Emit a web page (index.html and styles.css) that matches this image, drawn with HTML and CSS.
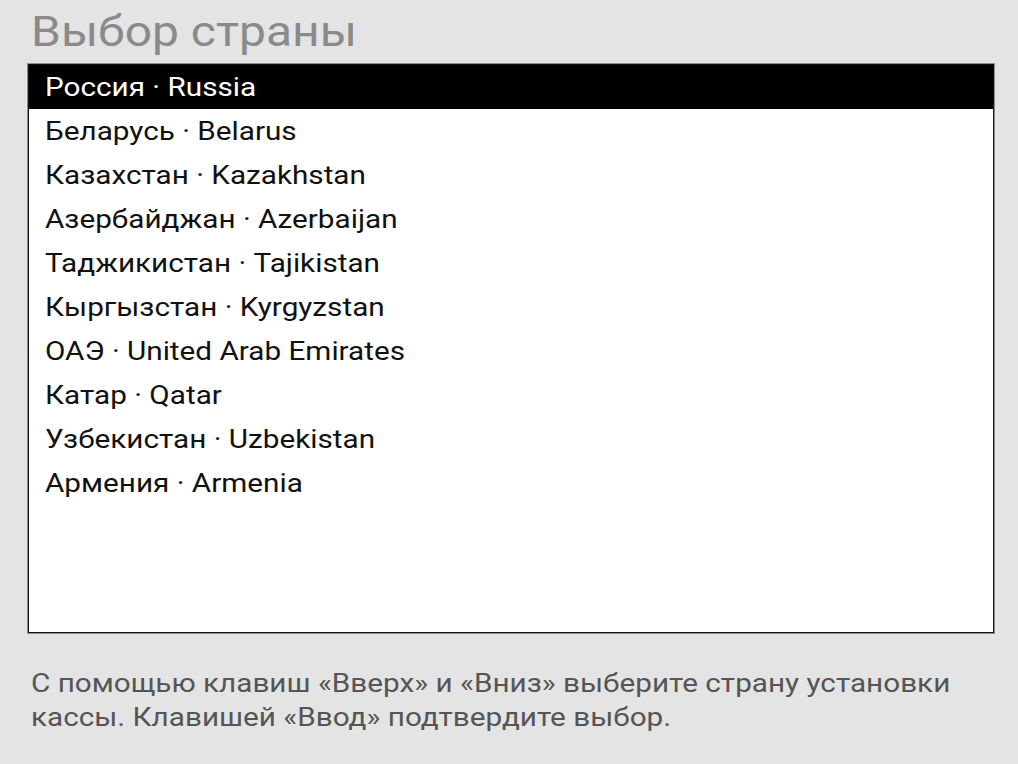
FILE: index.html
```html
<!DOCTYPE html>
<html lang="ru">
<head>
<meta charset="utf-8">
<link rel="stylesheet" href="styles.css">
</head>
<body>
<div class="page">
  <h1 class="title"><span class="wide">Выбор страны</span></h1>
  <div class="listbox">
    <ul class="list">
      <li class="item selected"><span class="wide">Россия · Russia</span></li>
      <li class="item"><span class="wide">Беларусь · Belarus</span></li>
      <li class="item"><span class="wide">Казахстан · Kazakhstan</span></li>
      <li class="item"><span class="wide">Азербайджан · Azerbaijan</span></li>
      <li class="item"><span class="wide">Таджикистан · Tajikistan</span></li>
      <li class="item"><span class="wide">Кыргызстан · Kyrgyzstan</span></li>
      <li class="item"><span class="wide">ОАЭ · United Arab Emirates</span></li>
      <li class="item"><span class="wide">Катар · Qatar</span></li>
      <li class="item"><span class="wide">Узбекистан · Uzbekistan</span></li>
      <li class="item"><span class="wide">Армения · Armenia</span></li>
    </ul>
  </div>
  <p class="hint"><span class="wide hint-text">С помощью клавиш «Вверх» и «Вниз» выберите страну установки кассы. Клавишей «Ввод» подтвердите выбор.</span></p>
</div>
</body>
</html>
```
FILE: styles.css
```css
html, body {
  margin: 0;
  padding: 0;
  background: #e4e4e4;
  font-family: Roboto, "Noto Sans", sans-serif;
}
.page {
  width: 1018px;
  height: 764px;
  display: flex;
  flex-direction: column;
  padding: 0 24px 0 27px;
  box-sizing: border-box;
}
.wide {
  display: inline-block;
  transform: scaleX(1.142);
  transform-origin: left center;
  white-space: nowrap;
}
.title {
  margin: 6px 0 0 4px;
  font-size: 42px;
  font-weight: 400;
  line-height: 52px;
  color: #8a8a8a;
  height: 57px;
}
.listbox {
  width: 968px;
  height: 571px;
  box-sizing: border-box;
  border: 1px solid #8c8c8c;
  background: #fff;
}
.list {
  list-style: none;
  margin: 0;
  padding: 0;
  height: 100%;
  box-sizing: border-box;
  border: 1px solid #111;
}
.item {
  height: 44px;
  line-height: 44px;
  padding-left: 16px;
  font-size: 26px;
  color: #111;
}
.item.selected {
  background: #000;
  color: #fff;
}
.hint {
  margin: 32px 0 0 4px;
  font-size: 26px;
  line-height: 34px;
  color: #555;
}
.hint-text {
  white-space: normal;
  width: 810px;
}
```
